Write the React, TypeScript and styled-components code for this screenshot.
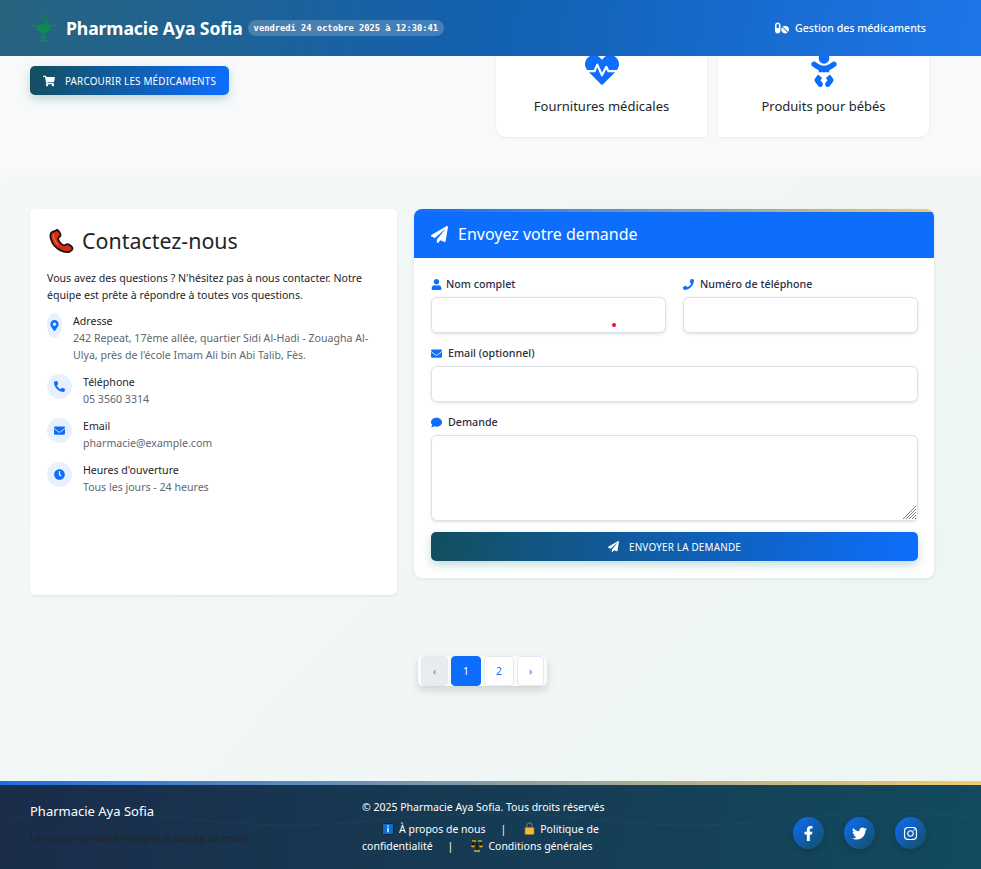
import React from "react";
import styled, { createGlobalStyle } from "styled-components";
import {
  FaBaby,
  FaClock,
  FaComment,
  FaEnvelope,
  FaFacebookF,
  FaHeartbeat,
  FaInstagram,
  FaMapMarkerAlt,
  FaPaperPlane,
  FaPhone,
  FaPhoneAlt,
  FaPills,
  FaShoppingCart,
  FaTwitter,
  FaUser,
} from "react-icons/fa";

const GlobalStyle = createGlobalStyle`
  * {
    box-sizing: border-box;
  }
  body {
    margin: 0;
    font-family: "Noto Sans", "Open Sans", sans-serif;
    color: #212529;
    background: #f8f9fa;
  }
`;

const Page = styled.div`
  height: 869px;
  overflow: hidden;
  display: flex;
  flex-direction: column;
`;

const Header = styled.header`
  height: 56px;
  flex: none;
  display: flex;
  align-items: center;
  justify-content: space-between;
  padding: 0 55px 0 30px;
  color: #fff;
  background: linear-gradient(100deg, #28647f 0%, #1260b0 50%, #1d75ea 100%);
  position: relative;
  z-index: 2;
`;

const Brand = styled.div`
  display: flex;
  align-items: center;
`;

const BrandName = styled.span`
  margin-left: 9px;
  font-size: 17.6px;
  font-weight: 700;
  letter-spacing: -0.1px;
`;

const Clock = styled.span`
  margin-left: 5px;
  padding: 0 6px;
  height: 16px;
  line-height: 16px;
  border-radius: 8px;
  background: rgba(255, 255, 255, 0.2);
  font-family: "DejaVu Sans Mono", monospace;
  font-size: 8.75px;
  font-weight: 700;
`;

const NavLink = styled.a`
  display: flex;
  align-items: center;
  gap: 6px;
  font-size: 10.6px;
  font-weight: 500;
`;

const Hero = styled.section`
  height: 119px;
  flex: none;
  overflow: hidden;
  display: flex;
  justify-content: space-between;
  padding: 10px 52px 38px 30px;
`;

const GradientButton = styled.button<{ $wide?: boolean }>`
  display: flex;
  align-items: center;
  justify-content: center;
  gap: 10px;
  border: 0;
  border-radius: 5px;
  color: #fff;
  font-family: inherit;
  font-size: 9.9px;
  letter-spacing: 0.2px;
  text-transform: uppercase;
  background: linear-gradient(100deg, #134e5e, #0d6efd);
  box-shadow: 0 4px 10px rgba(19, 110, 110, 0.25);
  width: ${(props) => (props.$wide ? "100%" : "199px")};
  height: 29px;
`;

const CategoryRow = styled.div`
  display: flex;
  align-items: flex-end;
  gap: 11px;
`;

const CategoryCard = styled.div<{ $side: "left" | "right" }>`
  width: 211px;
  height: 120px;
  display: flex;
  flex-direction: column;
  align-items: center;
  justify-content: flex-end;
  padding-bottom: 22px;
  background: #fff;
  font-size: 13px;
  border-radius: ${(props) =>
    props.$side === "left" ? "0 0 0 10px" : "0 0 10px 0"};
  box-shadow: 0 1px 3px rgba(0, 0, 0, 0.07);

  svg {
    color: #0d6efd;
    font-size: 34px;
    margin-bottom: 10px;
  }
`;

const Main = styled.main`
  flex: 1;
  display: flex;
  flex-direction: column;
  background: linear-gradient(135deg, #f4f8f9, #edf6f3);
`;

const ContactGrid = styled.div`
  display: flex;
  align-items: flex-start;
  gap: 17px;
  padding: 34px 47px 0 30px;
`;

const InfoCard = styled.div`
  width: 367px;
  height: 386px;
  flex: none;
  padding: 17px;
  background: #fff;
  border-radius: 5px;
  box-shadow: 0 1px 3px rgba(0, 0, 0, 0.08);
`;

const InfoTitle = styled.h2`
  display: flex;
  align-items: center;
  gap: 8px;
  margin: 0 0 14px;
  padding-left: 2px;
  font-size: 21.4px;
  font-weight: 400;
  line-height: 30px;
`;

const InfoText = styled.p`
  margin: 0 0 9px;
  font-size: 10.6px;
  line-height: 17px;
`;

const InfoRow = styled.div`
  display: flex;
  margin-bottom: 10px;
`;

const InfoBadge = styled.span<{ $narrow?: boolean }>`
  width: ${(props) => (props.$narrow ? "15px" : "25px")};
  height: 25px;
  flex: none;
  margin-right: 11px;
  border-radius: 50%;
  display: flex;
  align-items: center;
  justify-content: center;
  color: #0d6efd;
  background: #e7f0ff;
  font-size: 11px;
`;

const InfoLabel = styled.div`
  font-size: 10.6px;
  line-height: 17px;
`;

const InfoValue = styled.div`
  font-size: 10.6px;
  line-height: 17px;
  color: #5f666d;
`;

const FormCard = styled.form`
  width: 520px;
  height: 369px;
  flex: none;
  overflow: hidden;
  background: #fff;
  border-radius: 8px;
  box-shadow: 0 1px 4px rgba(0, 0, 0, 0.08);
`;

const FormStrip = styled.div`
  height: 3px;
  background: linear-gradient(90deg, #0d6efd, #f0cb6e);
`;

const FormHeader = styled.h3`
  height: 46px;
  margin: 0;
  padding: 0 17px 2px;
  display: flex;
  align-items: center;
  gap: 10px;
  color: #fff;
  background: #0d6efd;
  font-size: 16px;
  font-weight: 400;
`;

const FormBody = styled.div`
  padding: 17px 16px 17px 17px;
`;

const FieldRow = styled.div`
  display: flex;
  gap: 17px;
`;

const Field = styled.div`
  flex: 1;
  position: relative;
  margin-bottom: 11px;
`;

const FieldLabel = styled.label<{ $tight?: boolean }>`
  display: flex;
  align-items: center;
  gap: ${(props) => (props.$tight ? "4px" : "6px")};
  height: 18px;
  margin-bottom: 4px;
  font-size: 10.7px;
  font-weight: 500;
  color: #2a2f45;

  svg {
    color: #0d6efd;
    width: auto;
    height: 11px;
  }
`;

const TextInput = styled.input`
  display: block;
  width: 100%;
  height: 36px;
  background: #fff;
  border: 1px solid #dee2e6;
  border-radius: 6px;
  box-shadow: 0 1px 3px rgba(0, 0, 0, 0.12);
  outline: none;
`;

const TextArea = styled.textarea`
  display: block;
  width: 100%;
  height: 86px;
  background: #fff;
  border: 1px solid #dee2e6;
  border-radius: 6px;
  box-shadow: 0 1px 3px rgba(0, 0, 0, 0.12);
  outline: none;
  resize: none;
`;

const ResizeGrip = styled.svg`
  position: absolute;
  right: 1px;
  bottom: 1px;
`;

const RedDot = styled.span`
  position: absolute;
  left: 181px;
  top: 48px;
  width: 4px;
  height: 4px;
  border-radius: 50%;
  background: #f01020;
`;

const Pager = styled.nav`
  align-self: flex-start;
  margin: 61px 0 0 418px;
  display: flex;
  align-items: stretch;
  gap: 3px;
  padding: 0 3px;
  height: 30px;
  border-radius: 5px;
  background: rgba(255, 255, 255, 0.6);
  box-shadow: 0 4px 8px rgba(0, 0, 0, 0.14);
`;

const PageButton = styled.button<{ $state?: "active" | "disabled"; $wide?: boolean }>`
  width: ${(props) => (props.$wide ? "30px" : "27px")};
  padding: 0;
  border: 1px solid ${(props) => (props.$state === "active" ? "#0d6efd" : "#e6e9ec")};
  border-radius: 4px;
  font-family: inherit;
  font-size: 10.4px;
  color: ${(props) =>
    props.$state === "active" ? "#fff" : props.$state === "disabled" ? "#6c757d" : "#0d6efd"};
  background: ${(props) =>
    props.$state === "active" ? "#0d6efd" : props.$state === "disabled" ? "#e9ecef" : "#fff"};
`;

const Spacer = styled.div`
  flex: 1;
`;

const FooterStrip = styled.div`
  height: 4px;
  flex: none;
  background: linear-gradient(90deg, #1d6fe0, #f2cb6c);
`;

const Footer = styled.footer`
  height: 84px;
  flex: none;
  position: relative;
  display: flex;
  padding: 14px 55px 0 30px;
  color: #fff;
  background: linear-gradient(100deg, #1a2c4a, #124a5e);
`;

const FooterWave = styled.svg`
  position: absolute;
  left: 0;
  top: 20px;
`;

const FooterBrand = styled.div`
  position: relative;
  width: 332px;
  flex: none;
  padding-top: 2px;
`;

const FooterName = styled.div`
  font-size: 13px;
  line-height: 20px;
`;

const FooterTagline = styled.div`
  margin-top: 9px;
  font-size: 10.4px;
  line-height: 17px;
  white-space: nowrap;
  color: #212529;
`;

const FooterMiddle = styled.div`
  position: relative;
  width: 250px;
  flex: none;
  font-size: 10.5px;
  line-height: 17px;
`;

const FooterLinks = styled.div`
  margin-top: 5px;
`;

const FooterLink = styled.a`
  margin: 0 15px 0 18px;

  &:first-child {
    margin-left: 20px;
  }

  svg {
    vertical-align: -2px;
    margin-right: 5px;
  }
`;

const Socials = styled.div`
  position: relative;
  margin-left: auto;
  display: flex;
  gap: 20px;
  padding-top: 18px;
`;

const SocialLink = styled.a`
  width: 31px;
  height: 32px;
  border-radius: 50%;
  display: flex;
  align-items: center;
  justify-content: center;
  color: #fff;
  font-size: 15px;
  background: linear-gradient(135deg, #0d6efd, #134e5e);
  box-shadow: 0 3px 6px rgba(0, 0, 0, 0.15);
`;

const PharmacyLogo = () => (
  <svg width="27" height="28" viewBox="0 0 27 28" fill="none" stroke="#0f8a50">
    <path d="M1 11.5h25" strokeWidth="1.4" />
    <path d="M6 12c1 4.5 4 6.500 7.500 6.500S20 16.500 21 12z" fill="#0f8a50" strokeWidth="1" />
    <path d="M13.500 18v9M9 27h9" strokeWidth="1.500" />
    <path d="M16.500 2.500c-2-1.500-4.500-1-4.500.8 0 2.700 5 1.700 5 4.700 0 2-2.500 3-5 2.500" strokeWidth="1.300" />
    <path d="M10 23h7" strokeWidth="1.400" />
  </svg>
);

const PhoneEmoji = () => (
  <svg width="25" height="26" viewBox="0 0 26 26">
    <path
      d="M8 2 3.500 3.500C1.500 4.500 1 7 1.800 10.500c1.300 5 5 9.500 9.700 12 3.500 1.900 7.500 2.500 10 1.500 1.800-.8 3-2.300 3-3.500 0-1.300-3.500-4-5.200-4.300-1.500-.3-2.500 1.500-4 1.300-2.500-.4-5.800-5-5.800-7 0-1.500 2.200-1.800 2.500-3.500.2-1.500-2.200-5.800-4-5.500z"
      fill="#dd2a12"
      stroke="#141414"
      strokeWidth="1.800"
      strokeLinejoin="round"
    />
    <path d="M4.500 6c0 4 2 8 5 11" fill="none" stroke="#f0703a" strokeWidth="1.200" />
  </svg>
);

const InfoEmoji = () => (
  <svg width="12" height="12" viewBox="0 0 12 12">
    <rect x="0.500" y="0.500" width="11" height="11" rx="1" fill="#0a6ed1" stroke="#123" />
    <rect x="5.300" y="2.500" width="1.400" height="1.400" fill="#fff" />
    <rect x="5.300" y="4.800" width="1.400" height="4.500" fill="#fff" />
  </svg>
);

const LockEmoji = () => (
  <svg width="11" height="13" viewBox="0 0 11 13">
    <path d="M3 6V3.500a2.500 2.500 0 0 1 5 0V6" fill="none" stroke="#666" strokeWidth="1.400" />
    <rect x="1" y="5.500" width="9" height="7" rx="1" fill="#f3b93f" stroke="#a87a18" strokeWidth="0.600" />
  </svg>
);

const ScalesEmoji = () => (
  <svg width="12" height="13" viewBox="0 0 12 13">
    <path d="M1 2h10" stroke="#e8a914" strokeWidth="1.400" />
    <path d="M6 1v10" stroke="#20180a" strokeWidth="1.400" />
    <path d="M3 12h6" stroke="#e8a914" strokeWidth="1.600" />
    <path d="M0 6.500 2 2.500l2 4zM8 6.500l2-4 2 4z" fill="#1a1408" />
    <path d="M0 6.500h4c0 1.300-.9 2-2 2s-2-.7-2-2zM8 6.500h4c0 1.300-.9 2-2 2s-2-.7-2-2z" fill="#e8a914" />
  </svg>
);

export default function App() {
  return (
    <Page>
      <GlobalStyle />
      <Header>
        <Brand>
          <PharmacyLogo />
          <BrandName>Pharmacie Aya Sofia</BrandName>
          <Clock>vendredi 24 octobre 2025 à 12:30:41</Clock>
        </Brand>
        <NavLink>
          <FaPills size={14} />
          Gestion des médicaments
        </NavLink>
      </Header>

      <Hero>
        <GradientButton type="button">
          <FaShoppingCart size={12} />
          Parcourir les médicaments
        </GradientButton>
        <CategoryRow>
          <CategoryCard $side="left">
            <FaHeartbeat />
            Fournitures médicales
          </CategoryCard>
          <CategoryCard $side="right">
            <FaBaby />
            Produits pour bébés
          </CategoryCard>
        </CategoryRow>
      </Hero>

      <Main>
        <ContactGrid>
          <InfoCard>
            <InfoTitle>
              <PhoneEmoji />
              Contactez-nous
            </InfoTitle>
            <InfoText>
              Vous avez des questions ? N'hésitez pas à nous contacter. Notre équipe est prête à
              répondre à toutes vos questions.
            </InfoText>
            <InfoRow>
              <InfoBadge $narrow>
                <FaMapMarkerAlt />
              </InfoBadge>
              <div>
                <InfoLabel>Adresse</InfoLabel>
                <InfoValue>
                  242 Repeat, 17ème allée, quartier Sidi Al-Hadi - Zouagha Al-Ulya, près de l'école
                  Imam Ali bin Abi Talib, Fès.
                </InfoValue>
              </div>
            </InfoRow>
            <InfoRow>
              <InfoBadge>
                <FaPhoneAlt />
              </InfoBadge>
              <div>
                <InfoLabel>Téléphone</InfoLabel>
                <InfoValue>05 3560 3314</InfoValue>
              </div>
            </InfoRow>
            <InfoRow>
              <InfoBadge>
                <FaEnvelope />
              </InfoBadge>
              <div>
                <InfoLabel>Email</InfoLabel>
                <InfoValue>pharmacie@example.com</InfoValue>
              </div>
            </InfoRow>
            <InfoRow>
              <InfoBadge>
                <FaClock />
              </InfoBadge>
              <div>
                <InfoLabel>Heures d'ouverture</InfoLabel>
                <InfoValue>Tous les jours - 24 heures</InfoValue>
              </div>
            </InfoRow>
          </InfoCard>

          <FormCard>
            <FormStrip />
            <FormHeader>
              <FaPaperPlane size={17} />
              Envoyez votre demande
            </FormHeader>
            <FormBody>
              <FieldRow>
                <Field>
                  <FieldLabel $tight>
                    <FaUser />
                    Nom complet
                  </FieldLabel>
                  <TextInput type="text" />
                  <RedDot />
                </Field>
                <Field>
                  <FieldLabel>
                    <FaPhone />
                    Numéro de téléphone
                  </FieldLabel>
                  <TextInput type="tel" />
                </Field>
              </FieldRow>
              <Field>
                <FieldLabel>
                  <FaEnvelope />
                  Email (optionnel)
                </FieldLabel>
                <TextInput type="email" />
              </Field>
              <Field>
                <FieldLabel>
                  <FaComment />
                  Demande
                </FieldLabel>
                <TextArea />
                <ResizeGrip width="15" height="15" viewBox="0 0 15 15" stroke="#777" strokeWidth="1">
                  <path d="M1 14 14 1M4 14 14 4M7 14l7-7M10 14l4-4M13 14l1-1" />
                </ResizeGrip>
              </Field>
              <GradientButton type="button" $wide>
                <FaPaperPlane size={11} />
                Envoyer la demande
              </GradientButton>
            </FormBody>
          </FormCard>
        </ContactGrid>

        <Pager>
          <PageButton type="button" $state="disabled">‹</PageButton>
          <PageButton type="button" $state="active" $wide>1</PageButton>
          <PageButton type="button" $wide>2</PageButton>
          <PageButton type="button">›</PageButton>
        </Pager>
        <Spacer />
      </Main>

      <FooterStrip />
      <Footer>
        <FooterWave width="981" height="24" viewBox="0 0 981 24" fill="none" stroke="#fff" strokeOpacity="0.03">
          <path d="M0 14c60-8 120-8 190 0s130 8 200 0 130-8 200 0 130 8 200 0 130-8 191 0" />
        </FooterWave>
        <FooterBrand>
          <FooterName>Pharmacie Aya Sofia</FooterName>
          <FooterTagline>Les soins de santé intégrés à portée de main</FooterTagline>
        </FooterBrand>
        <FooterMiddle>
          <div>© 2025 Pharmacie Aya Sofia. Tous droits réservés</div>
          <FooterLinks>
            <FooterLink>
              <InfoEmoji />À propos de nous
            </FooterLink>
            |
            <FooterLink>
              <LockEmoji />
              Politique de confidentialité
            </FooterLink>
            |
            <FooterLink>
              <ScalesEmoji />
              Conditions générales
            </FooterLink>
          </FooterLinks>
        </FooterMiddle>
        <Socials>
          <SocialLink>
            <FaFacebookF />
          </SocialLink>
          <SocialLink>
            <FaTwitter />
          </SocialLink>
          <SocialLink>
            <FaInstagram />
          </SocialLink>
        </Socials>
      </Footer>
    </Page>
  );
}
